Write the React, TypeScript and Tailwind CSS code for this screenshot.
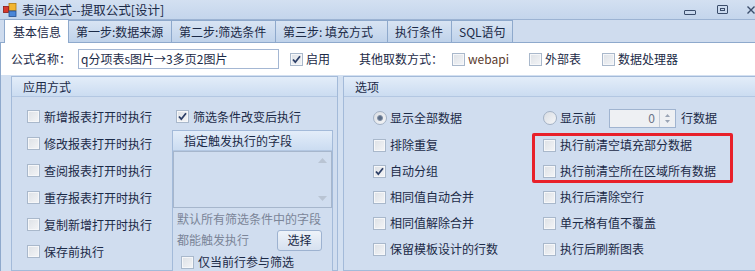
import React from "react";

const ink = "text-[#1b2a47]";

const Box = ({ checked }: { checked?: boolean }) => (
  <span className="relative inline-flex w-[13px] h-[13px] shrink-0 border border-[#a9b8cb] bg-gradient-to-br from-[#dde1e6] to-[#f4f5f7] shadow-[inset_0_0_0_1px_#f6f7f9]">
    {checked && (
      <svg viewBox="0 0 13 13" className="absolute -left-px -top-px w-[13px] h-[13px]">
        <path d="M3 6.5 L5.3 9.2 L10 3.2" fill="none" stroke="#2c3e66" strokeWidth="1.8" />
      </svg>
    )}
  </span>
);

const Radio = ({ checked }: { checked?: boolean }) => (
  <span className="relative inline-flex items-center justify-center w-[14px] h-[14px] shrink-0 rounded-full border border-[#a3b1c4] bg-gradient-to-br from-[#d9dde3] to-[#f5f6f8]">
    {checked && <span className="w-[6px] h-[6px] rounded-full bg-[#5a6b85] border border-[#8190a6]" />}
  </span>
);

const Row = ({ label, checked, h = "h-[27px]" }: { label: string; checked?: boolean; h?: string }) => (
  <div className={`flex items-center gap-[4px] ${h}`}>
    <Box checked={checked} />
    <span className="whitespace-nowrap">{label}</span>
  </div>
);

const GroupHeader = ({ title, pl }: { title: string; pl: string }) => (
  <div className={`h-[20px] flex items-center ${pl} bg-gradient-to-b from-[#e3edf9] to-[#cbdcf1] border-b border-[#b3c7e2]`}>
    {title}
  </div>
);

const tabs = [
  { name: "第一步:数据来源", w: "w-[103px]" },
  { name: "第二步:筛选条件", w: "w-[104px]" },
  { name: "第三步: 填充方式", w: "w-[112px]" },
  { name: "执行条件", w: "w-[64px]" },
  { name: "SQL语句", w: "w-[61px]" },
];

export default function App() {
  return (
    <div
      className={`w-[755px] h-[271px] overflow-hidden bg-[#cddbee] text-[12px] leading-[16px] ${ink}`}
      style={{ fontFamily: '"Noto Sans CJK SC", "Liberation Sans", sans-serif' }}
    >
      {/* title bar */}
      <div className="h-[20px] flex items-center border-b border-[#9cb3d3] bg-gradient-to-b from-[#d3e0f1] to-[#c4d5ec]">
        <svg viewBox="0 0 14 14" className="w-[14px] h-[14px] ml-[3px]">
          <rect x="6" y="0.5" width="7" height="7" fill="#f2b632" stroke="#b07a10" strokeWidth="0.8" />
          <rect x="0.5" y="3.5" width="5" height="6" fill="#d8382c" stroke="#8a1a14" strokeWidth="0.8" />
          <rect x="6" y="8" width="7" height="5.5" fill="#4a86d8" stroke="#234f90" strokeWidth="0.8" />
        </svg>
        <span className="ml-[5px] text-[12.5px]">表间公式--提取公式[设计]</span>
        <div className="ml-auto flex items-center">
          <span className="w-[12px] h-[5px] border border-[#3b4d6b] rounded-[1px] mt-[5px]" />
          <span className="ml-[21px] w-[11px] h-[9px] border border-[#3b4d6b] rounded-[1px] flex items-center justify-center">
            <span className="w-[5px] h-[3px] border border-[#3b4d6b]" />
          </span>
          <svg viewBox="0 0 8 8" className="ml-[19px] w-[8px] h-[8px]">
            <path d="M0.5 0.5 L7.5 7.5 M7.5 0.5 L0.5 7.5" stroke="#3b4d6b" strokeWidth="1.4" />
          </svg>
        </div>
      </div>

      {/* tab strip */}
      <div className="h-[23px] flex items-end pl-[4px] border-b border-[#8ea9cc] bg-[#cfdcee]">
        <div className="w-[65px] h-[24px] -mb-px flex items-center pl-[8px] bg-white border border-b-0 border-[#8ea9cc]">
          基本信息
        </div>
        {tabs.map((t) => (
          <div
            key={t.name}
            className={`${t.w} h-[22px] flex items-center pl-[7px] whitespace-nowrap bg-gradient-to-b from-[#d8e4f3] to-[#bfd2ea] border border-l-0 border-b-0 border-[#8ea9cc]`}
          >
            {t.name}
          </div>
        ))}
      </div>

      {/* name row */}
      <div className="h-[32px] flex items-center bg-white border-l border-[#8ea9cc] pl-[10px]">
        <span className="w-[67px] whitespace-nowrap">公式名称：</span>
        <div className="w-[201px] h-[20px] border border-[#a4b7d3] flex items-center pl-[2px] whitespace-nowrap">
          q分项表s图片→3多页2图片
        </div>
        <div className="ml-[11px] w-[69px] flex items-center gap-[3px]">
          <Box checked />
          <span>启用</span>
        </div>
        <span className="w-[93px] whitespace-nowrap">其他取数方式：</span>
        <div className="w-[77px] flex items-center gap-[3px]">
          <Box />
          <span className="text-[#5b3a2e]">webapi</span>
        </div>
        <div className="w-[73px] flex items-center gap-[3px]">
          <Box />
          <span>外部表</span>
        </div>
        <div className="flex items-center gap-[3px]">
          <Box />
          <span>数据处理器</span>
        </div>
      </div>

      {/* groups */}
      <div className="flex h-[196px] pt-px pl-[10px] gap-[5px] border-l border-[#8ea9cc] bg-[#d3e0f1]">
        {/* 应用方式 */}
        <div className="w-[327px] shrink-0 border border-[#a3bad9] bg-[#d0ddef]">
          <GroupHeader title="应用方式" pl="pl-[11px]" />
          <div className="flex pt-[6px]">
            <div className="w-[160px] shrink-0 pl-[15px]">
              <Row label="新增报表打开时执行" />
              <Row label="修改报表打开时执行" />
              <Row label="查阅报表打开时执行" />
              <Row label="重存报表打开时执行" />
              <Row label="复制新增打开时执行" />
              <Row label="保存前执行" />
            </div>
            <div className="w-[161px] shrink-0">
              <div className="pl-[4px]">
                <Row label="筛选条件改变后执行" checked />
              </div>
              <div className="border border-[#a3bad9] h-[150px] bg-[#d0ddef]">
                <GroupHeader title="指定触发执行的字段" pl="pl-[11px]" />
                <div className="h-[57px] border border-[#a6b6cc] flex">
                  <div className="flex-1" />
                  <div className="w-[17px] flex flex-col items-center justify-between py-[6px]">
                    <svg viewBox="0 0 9 5" className="w-[9px] h-[5px]">
                      <path d="M0 5 L4.5 0 L9 5 Z" fill="#b9c4d3" />
                    </svg>
                    <svg viewBox="0 0 9 5" className="w-[9px] h-[5px]">
                      <path d="M0 0 L4.5 5 L9 0 Z" fill="#b9c4d3" />
                    </svg>
                  </div>
                </div>
                <div className="h-[21px] flex items-center pl-[4px] text-[#7b8598] whitespace-nowrap">
                  默认所有筛选条件中的字段
                </div>
                <div className="h-[22px] flex items-center pl-[4px]">
                  <span className="w-[100px] text-[#7b8598] whitespace-nowrap">都能触发执行</span>
                  <button className="w-[45px] h-[21px] rounded-[3px] border border-[#9db2d0] bg-gradient-to-b from-[#eef3f9] to-[#d6e1f0] flex items-center justify-center">
                    选择
                  </button>
                </div>
                <div className="pl-[8px]">
                  <Row label="仅当前行参与筛选" h="h-[22px]" />
                </div>
              </div>
            </div>
          </div>
        </div>

        {/* 选项 */}
        <div className="relative w-[420px] shrink-0 border border-[#a3bad9] bg-[#d0ddef]">
          <GroupHeader title="选项" pl="pl-[11px]" />
          <div className="pt-[7px]">
            <div className="h-[28px] flex items-center">
              <div className="w-[199px] shrink-0 pl-[29px] flex items-center gap-[3px]">
                <Radio checked />
                <span>显示全部数据</span>
              </div>
              <div className="flex items-center">
                <Radio />
                <span className="ml-[3px] w-[49px]">显示前</span>
                <div className="w-[67px] h-[19px] border border-[#a0b4d0] bg-[#eef0f3] flex">
                  <span className="flex-1 text-right pr-[4px] text-[#6b7488]">0</span>
                  <div className="w-[16px] border-l border-[#c4ccd8] flex flex-col items-center justify-center gap-[3px]">
                    <svg viewBox="0 0 5 3" className="w-[5px] h-[3px]">
                      <path d="M0 3 L2.5 0 L5 3 Z" fill="#9aa4b4" />
                    </svg>
                    <svg viewBox="0 0 5 3" className="w-[5px] h-[3px]">
                      <path d="M0 0 L2.5 3 L5 0 Z" fill="#9aa4b4" />
                    </svg>
                  </div>
                </div>
                <span className="ml-[5px]">行数据</span>
              </div>
            </div>
            <div className="flex">
              <div className="w-[199px] shrink-0 pl-[29px]">
                <Row label="排除重复" h="h-[26px]" />
                <Row label="自动分组" checked h="h-[26px]" />
                <Row label="相同值自动合并" h="h-[26px]" />
                <Row label="相同值解除合并" h="h-[26px]" />
                <Row label="保留模板设计的行数" h="h-[26px]" />
              </div>
              <div>
                <Row label="执行前清空填充部分数据" h="h-[26px]" />
                <Row label="执行前清空所在区域所有数据" h="h-[26px]" />
                <Row label="执行后清除空行" h="h-[26px]" />
                <Row label="单元格有值不覆盖" h="h-[26px]" />
                <Row label="执行后刷新图表" h="h-[26px]" />
              </div>
            </div>
          </div>
          {/* highlight annotation */}
          <div className="absolute left-[188px] top-[56px] w-[201px] h-[50px] border-[3px] border-[#e8202a] rounded-[2px]" />
        </div>
      </div>
    </div>
  );
}
